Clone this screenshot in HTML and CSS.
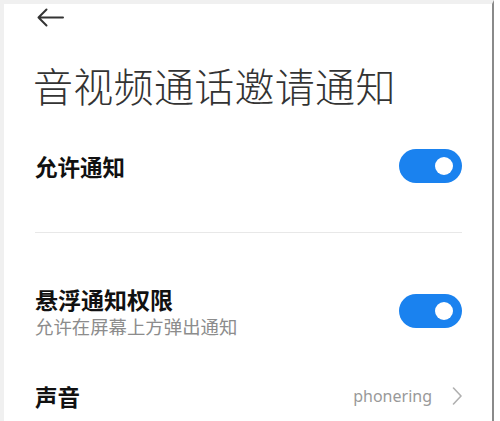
FILE: index.html
```html
<!DOCTYPE html>
<html lang="zh-CN">
<head>
<meta charset="UTF-8">
<meta name="viewport" content="width=device-width, initial-scale=1.0">
<title>音视频通话邀请通知</title>
<link rel="stylesheet" href="styles.css">
</head>
<body>

<div class="screen">
    <!-- 返回 -->
    <div class="header">
        <svg class="back" width="28" height="20" viewBox="0 0 28 20">
            <path d="M27 9.5 H2.5 M10.5 1.5 L2.5 9.5 L10.5 17.5" fill="none" stroke="#333" stroke-width="2" stroke-linecap="round" stroke-linejoin="round"/>
        </svg>
    </div>

    <h1 class="title">音视频通话邀请通知</h1>

    <div class="row row-first">
        <p class="label">允许通知</p>
        <div class="switch"><span class="knob"></span></div>
    </div>

    <div class="divider"></div>

    <div class="row row-float">
        <div>
            <p class="label">悬浮通知权限</p>
            <p class="sub">允许在屏幕上方弹出通知</p>
        </div>
        <div class="switch"><span class="knob"></span></div>
    </div>

    <div class="row row-sound">
        <p class="label">声音</p>
        <div class="value">
            <span>phonering</span>
            <svg width="10" height="18" viewBox="0 0 10 18">
                <path d="M1.5 1 L9 9 L1.5 17" fill="none" stroke="#b0b0b0" stroke-width="1.6" stroke-linecap="round" stroke-linejoin="round"/>
            </svg>
        </div>
    </div>
</div>

</body>
</html>
```

FILE: styles.css
```css
body {
    margin: 0;
    background-color: #fff;
    font-family: "Noto Sans CJK SC", "Noto Sans", sans-serif;
    color: #111;
}
p, h1 {
    margin: 0;
}
.screen {
    width: 494px;
    height: 421px;
    border-top: 4px solid #f0f0f0;
    border-left: 4px solid #f0f0f0;
    border-right: 2px solid #8a8a8a;
    padding-left: 31px;
    padding-right: 30px;
    box-sizing: border-box;
    overflow: hidden;
}
.header {
    height: 28px;
    display: flex;
    align-items: center;
    padding-left: 1px;
}
.title {
    margin-top: 29px;
    font-size: 40px;
    font-weight: 300;
    line-height: 48px;
    color: #333;
    letter-spacing: 0.3px;
    margin-left: -2px;
}
.row {
    display: flex;
    align-items: center;
    justify-content: space-between;
}
.row-first {
    height: 70px;
    margin-top: 22px;
}
.label {
    font-size: 22.5px;
    font-weight: bold;
    line-height: 30px;
    color: #111;
}
.row-float .label {
    font-size: 23px;
}
.sub {
    font-size: 18.4px;
    line-height: 24px;
    color: #8c8c8c;
}
.divider {
    height: 1px;
    background-color: #e8e8e8;
    margin-top: 31px;
}
.row-float {
    margin-top: 51px;
}
.row-sound {
    height: 40px;
    margin-top: 38px;
}
.switch {
    width: 63px;
    height: 34px;
    border-radius: 17px;
    background-color: #1a82ef;
    display: flex;
    align-items: center;
    justify-content: flex-end;
    padding-right: 9px;
    box-sizing: border-box;
}
.knob {
    width: 18px;
    height: 18px;
    border-radius: 50%;
    background-color: #fff;
}
.value {
    display: flex;
    align-items: center;
    gap: 20px;
    font-family: "Noto Sans", sans-serif;
    font-size: 16px;
    color: #999;
}
```
